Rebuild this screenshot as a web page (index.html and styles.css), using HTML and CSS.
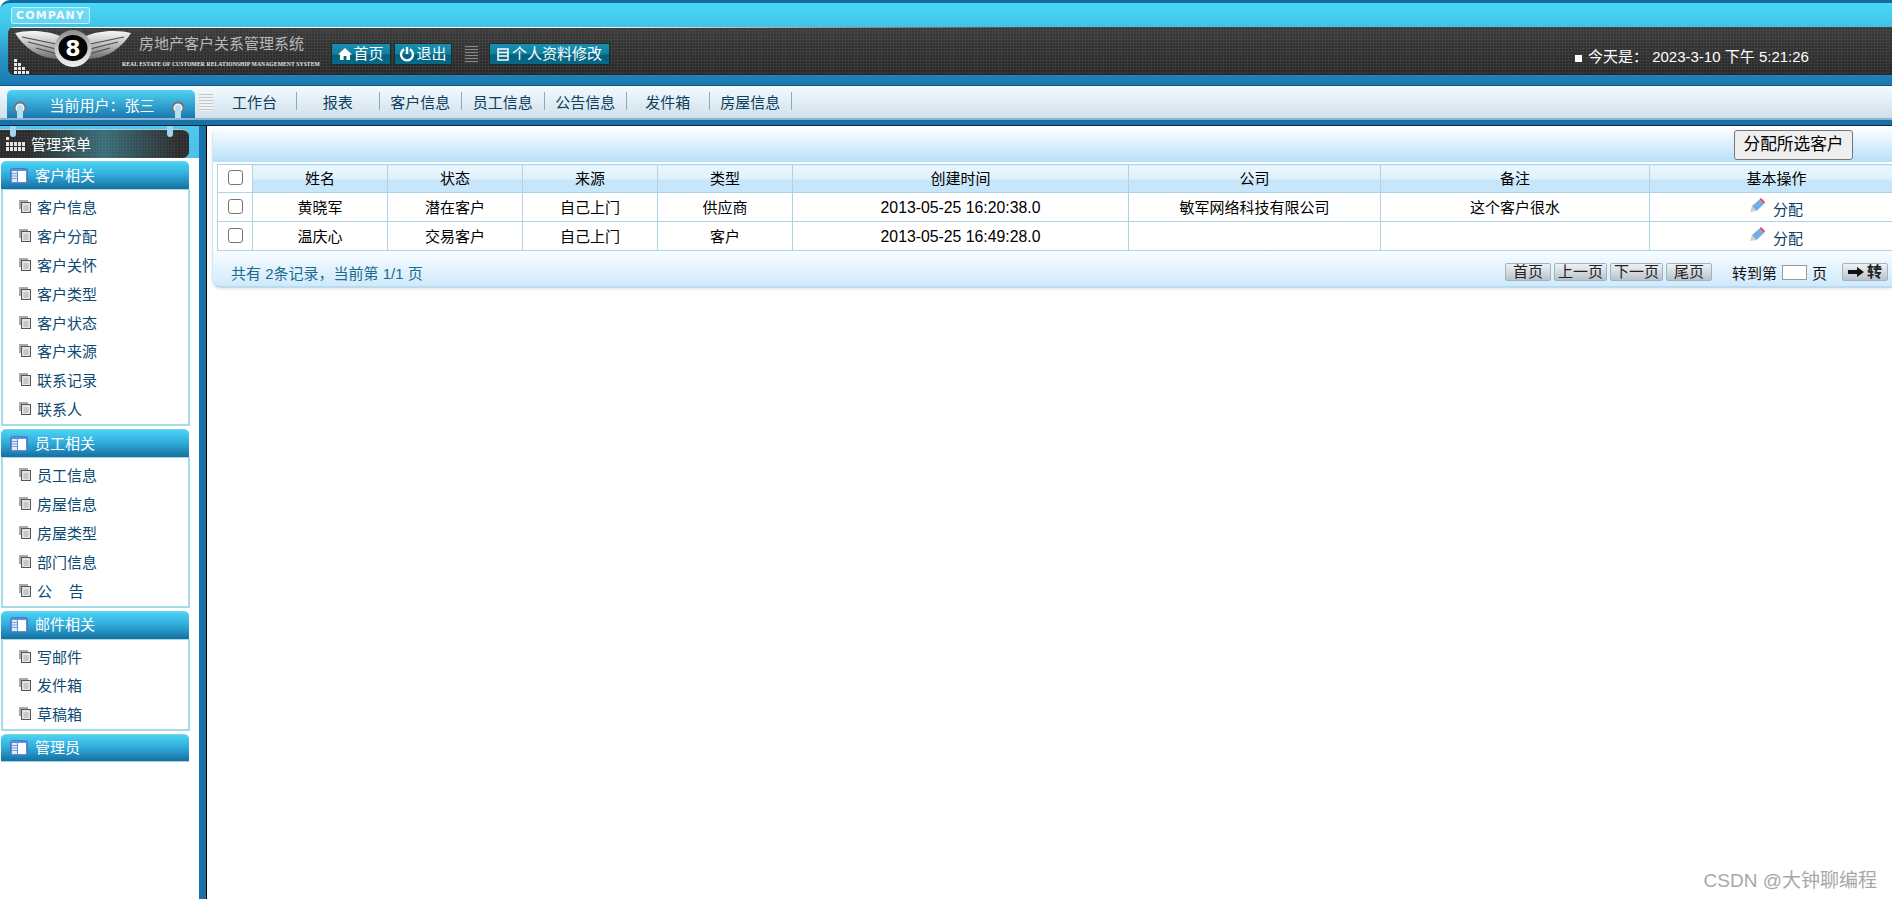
FILE: index.html
```html
<!DOCTYPE html>
<html lang="zh-CN">
<head>
<meta charset="utf-8">
<title>房地产客户关系管理系统</title>
<link rel="stylesheet" href="styles.css">
</head>
<body>
<svg class="defs" width="0" height="0" aria-hidden="true">
  <defs>
    <linearGradient id="wing" x1="0" y1="0" x2="0" y2="1">
      <stop offset="0" stop-color="#f8f8f8"/><stop offset=".55" stop-color="#b4b4b4"/><stop offset="1" stop-color="#6a6a6a"/>
    </linearGradient>
    <linearGradient id="ringg" x1="0" y1="0" x2="0" y2="1">
      <stop offset="0" stop-color="#8d8d8d"/><stop offset=".5" stop-color="#c8c8c8"/><stop offset="1" stop-color="#f2f2f2"/>
    </linearGradient>
    <symbol id="panel-ic" viewBox="0 0 18 16">
      <rect x=".5" y=".5" width="17" height="15" rx="2" fill="#5b8fd8" stroke="#4a78c4"/>
      <rect x="2" y="3" width="5" height="11" fill="#dfeafa"/>
      <path d="M2 5.5h5M2 8h5M2 10.5h5" stroke="#7da3dc" stroke-width="1"/>
      <rect x="8" y="3" width="8" height="11" fill="#fff"/>
    </symbol>
    <symbol id="doc-ic" viewBox="0 0 12 13">
      <rect x="0" y="0" width="9" height="9" fill="#aaa"/>
      <rect x="2.5" y="2.5" width="9" height="10" fill="#e4e4e4" stroke="#555" stroke-width="1"/>
      <path d="M4.5 6h5M4.500 8h5M4.500 10h5" stroke="#aaa" stroke-width="1"/>
    </symbol>
    <symbol id="pencil-ic" viewBox="0 0 15 14">
      <path d="M0 14l2-6 4.500 5z" fill="#cfcfcf"/>
      <path d="M2 8L9.500 1.500 14 6 6.500 13z" fill="#74aee0"/>
      <path d="M9.500 1.500L11 0l4 4-1 2z" fill="#dc4a5c"/>
    </symbol>
    <symbol id="ring-ic" viewBox="0 0 14 17">
      <circle cx="7" cy="7" r="6.500" fill="#6e7478"/>
      <circle cx="7" cy="7" r="4.500" fill="#f2f8fc"/>
      <path d="M4 17V7a3 3 0 0 1 6 0v10z" fill="#b4def8"/>
    </symbol>
  </defs>
</svg>

<div class="page">
  <header class="head">
    <div class="head-top"><span class="company">COMPANY</span></div>
    <div class="banner">
      <svg class="logo" width="127" height="48" viewBox="8 27 127 48" aria-hidden="true">
        <path d="M15 33 C26 30 46 30 60 36 L58 59 C48 59 38 55 32 51 C25 46 19 40 15 33Z" fill="url(#wing)"/>
        <path d="M22 37 L56 44 M28 42 L56 49 M36 48 L57 54" stroke="#4c4c4c" stroke-width="1.2" fill="none"/>
        <path d="M131 33 C120 30 100 30 86 36 L88 59 C98 59 108 55 114 51 C121 46 127 40 131 33Z" fill="url(#wing)"/>
        <path d="M124 37 L90 44 M118 42 L90 49 M110 48 L89 54" stroke="#4c4c4c" stroke-width="1.2" fill="none"/>
        <circle cx="73" cy="48.500" r="18.500" fill="url(#ringg)"/>
        <ellipse cx="73" cy="48" rx="14.500" ry="13" fill="#050505"/>
        <text x="73" y="56" class="logo-b">8</text>
        <path d="M14 59h3v3h-3zM14 63h3v3h-3zM18 63h3v3h-3zM14 67h3v3h-3zM18 67h3v3h-3zM22 67h3v3h-3zM14 71h3v3h-3zM18 71h3v3h-3zM22 71h3v3h-3zM26 71h3v3h-3z" fill="#e8e8e8"/>
      </svg>
      <div class="brand">
        <div class="brand-title">房地产客户关系管理系统</div>
        <div class="brand-sub">REAL ESTATE OF CUSTOMER RELATIONSHIP MANAGEMENT SYSTEM</div>
      </div>
      <div class="links">
        <a class="hbtn w60">
          <svg width="14" height="14" viewBox="0 0 14 14"><path d="M7 1L0 7.500h2V13h3.600V9h2.800v4H12V7.500h2z" fill="#fff"/></svg>首页
        </a>
        <a class="hbtn w58">
          <svg width="16" height="16" viewBox="0 0 16 16"><path d="M5 3.200a6 6 0 1 0 6 0" fill="none" stroke="#fff" stroke-width="2.400"/><path d="M8 1v7" stroke="#fff" stroke-width="2.400"/></svg>退出
        </a>
        <span class="grip g-head"></span>
        <a class="hbtn w121">
          <svg width="12" height="13" viewBox="0 0 12 13"><path d="M1 1h10v11H1zM1 4.500h10M1 8h10" fill="none" stroke="#fff" stroke-width="1.500"/></svg>个人资料修改
        </a>
      </div>
      <div class="today"><i class="sq"></i>今天是：&nbsp;2023-3-10 下午 5:21:26</div>
    </div>
    <div class="head-foot"></div>
  </header>

  <nav class="nav">
    <div class="user-tab">
      <svg class="ring" width="14" height="17"><use href="#ring-ic"/></svg>
      <span class="user-name">当前用户：张三</span>
      <svg class="ring" width="14" height="17"><use href="#ring-ic"/></svg>
    </div>
    <span class="grip g-nav"></span>
    <ul class="nav-items">
      <li class="wide">工作台</li>
      <li>报表</li>
      <li>客户信息</li>
      <li>员工信息</li>
      <li>公告信息</li>
      <li>发件箱</li>
      <li>房屋信息</li>
    </ul>
  </nav>
  <div class="strip"></div>

  <div class="workspace">
    <aside class="side">
      <div class="side-title-wrap">
        <div class="side-title">
          <svg width="19" height="14" viewBox="0 0 19 14"><path d="M0 0h3v3H0zM0 5h3v4H0zM4 5h3v4H4zM8 5h3v4H8zM12 5h3v4h-3zM16 5h3v4h-3zM0 10h3v4H0zM4 10h3v4H4zM8 10h3v4H8zM12 10h3v4h-3zM16 10h3v4h-3z" fill="#e6e6e6"/></svg>
          <span>管理菜单</span>
        </div>
      </div>

      <section class="group">
        <h3 class="group-head"><svg width="18" height="16"><use href="#panel-ic"/></svg>客户相关</h3>
        <ul class="group-list">
          <li><svg width="12" height="13"><use href="#doc-ic"/></svg>客户信息</li>
          <li><svg width="12" height="13"><use href="#doc-ic"/></svg>客户分配</li>
          <li><svg width="12" height="13"><use href="#doc-ic"/></svg>客户关怀</li>
          <li><svg width="12" height="13"><use href="#doc-ic"/></svg>客户类型</li>
          <li><svg width="12" height="13"><use href="#doc-ic"/></svg>客户状态</li>
          <li><svg width="12" height="13"><use href="#doc-ic"/></svg>客户来源</li>
          <li><svg width="12" height="13"><use href="#doc-ic"/></svg>联系记录</li>
          <li><svg width="12" height="13"><use href="#doc-ic"/></svg>联系人</li>
        </ul>
      </section>
      <section class="group">
        <h3 class="group-head"><svg width="18" height="16"><use href="#panel-ic"/></svg>员工相关</h3>
        <ul class="group-list">
          <li><svg width="12" height="13"><use href="#doc-ic"/></svg>员工信息</li>
          <li><svg width="12" height="13"><use href="#doc-ic"/></svg>房屋信息</li>
          <li><svg width="12" height="13"><use href="#doc-ic"/></svg>房屋类型</li>
          <li><svg width="12" height="13"><use href="#doc-ic"/></svg>部门信息</li>
          <li><svg width="12" height="13"><use href="#doc-ic"/></svg>公&nbsp;&nbsp;&nbsp;&nbsp;告</li>
        </ul>
      </section>
      <section class="group">
        <h3 class="group-head"><svg width="18" height="16"><use href="#panel-ic"/></svg>邮件相关</h3>
        <ul class="group-list">
          <li><svg width="12" height="13"><use href="#doc-ic"/></svg>写邮件</li>
          <li><svg width="12" height="13"><use href="#doc-ic"/></svg>发件箱</li>
          <li><svg width="12" height="13"><use href="#doc-ic"/></svg>草稿箱</li>
        </ul>
      </section>
      <section class="group">
        <h3 class="group-head closed"><svg width="18" height="16"><use href="#panel-ic"/></svg>管理员</h3>
      </section>
    </aside>
    <div class="rail"></div>

    <main class="main">
      <div class="panel">
        <div class="toolbar"><button class="assign" type="button">分配所选客户</button></div>
        <table class="grid">
          <colgroup>
            <col class="c-check"><col class="c-s"><col class="c-s"><col class="c-s"><col class="c-s">
            <col class="c-time"><col class="c-co"><col class="c-note"><col class="c-op">
          </colgroup>
          <thead>
            <tr>
              <td class="chk"><input type="checkbox" class="cb"></td>
              <th>姓名</th><th>状态</th><th>来源</th><th>类型</th><th>创建时间</th><th>公司</th><th>备注</th><th>基本操作</th>
            </tr>
          </thead>
          <tbody>
            <tr>
              <td class="chk"><input type="checkbox" class="cb"></td>
              <td>黄晓军</td><td>潜在客户</td><td>自己上门</td><td>供应商</td><td class="num">2013-05-25 16:20:38.0</td><td>敏军网络科技有限公司</td><td>这个客户很水</td>
              <td><span class="op"><svg width="15" height="14"><use href="#pencil-ic"/></svg><a>分配</a></span></td>
            </tr>
            <tr>
              <td class="chk"><input type="checkbox" class="cb"></td>
              <td>温庆心</td><td>交易客户</td><td>自己上门</td><td>客户</td><td class="num">2013-05-25 16:49:28.0</td><td></td><td></td>
              <td><span class="op"><svg width="15" height="14"><use href="#pencil-ic"/></svg><a>分配</a></span></td>
            </tr>
          </tbody>
        </table>
        <div class="pager">
          <span class="count">共有 2条记录，当前第 1/1 页</span>
          <div class="pager-ctrl">
            <button class="pbtn w46" type="button">首页</button>
            <button class="pbtn w53" type="button">上一页</button>
            <button class="pbtn w53" type="button">下一页</button>
            <button class="pbtn w46" type="button">尾页</button>
            <span class="goto">转到第<input class="page-input" type="text">页</span>
            <button class="pbtn w46 go" type="button"><svg width="16" height="10" viewBox="0 0 16 10"><path d="M0 3h9V0l7 5-7 5V7H0z" fill="#111"/></svg>转</button>
          </div>
        </div>
      </div>
    </main>
  </div>
  <div class="watermark">CSDN @大钟聊编程</div>
</div>
</body>
</html>
```

FILE: styles.css
```css
* { box-sizing: border-box; }
html, body { margin: 0; padding: 0; height: 100%; overflow: hidden; background: #fff; }
body { font-family: "Liberation Sans", "Noto Sans CJK SC", sans-serif; font-size: 15px; color: #000; }
ul { list-style: none; margin: 0; padding: 0; }
h3 { margin: 0; font-weight: normal; font-size: 15px; }
.defs { position: absolute; }
.page { position: relative; height: 899px; display: flex; flex-direction: column; overflow: hidden; }

/* header */
.head {
  height: 85px; flex: none; margin-top: 0; border-top: 3px solid #146ba3; border-top-left-radius: 10px;
  background: linear-gradient(180deg, #49d8f6 0, #3cc0e4 28px, #2a96c8 52px, #1a78b0 82px);
  display: flex; flex-direction: column;
}
.head-top { height: 24px; padding: 4px 0 0 11px; flex: none; }
.company {
  display: block; width: 79px; height: 17px; border: 1px solid rgba(255,255,255,.6); border-radius: 3px;
  background: rgba(255,255,255,.22); color: #f2fbff; font: bold 11px/15px "DejaVu Sans", sans-serif;
  letter-spacing: 1.1px; text-align: center;
}
.banner {
  height: 48px; margin-left: 8px; flex: none; display: flex; align-items: stretch; border-radius: 6px 0 0 6px;
  background-color: #2f2f2f;
  background-image:
    linear-gradient(90deg, #fff, #fff 30%, rgba(255,255,255,0) 55%),
    linear-gradient(90deg, rgba(255,255,255,.05) 1px, transparent 1px),
    linear-gradient(180deg, rgba(255,255,255,.05) 1px, transparent 1px),
    linear-gradient(180deg, #3a3a3a, #272727);
  background-size: 100% 1px, 3px 3px, 3px 3px, 100% 100%;
  background-repeat: no-repeat, repeat, repeat, no-repeat;
}
.logo { flex: none; display: block; margin-right: -13px; }
.logo-b { font: bold 22px "DejaVu Sans", sans-serif; fill: #fff; text-anchor: middle; }
.brand { width: 199px; flex: none; display: flex; flex-direction: column; }
.brand-title { padding: 7px 0 0 17px; font-size: 15px; line-height: 20px; color: #b9b9b9; white-space: nowrap; }
.brand-sub {
  margin-top: 6px; font: bold 5.580px/8px "Liberation Serif", serif; color: #e8e8e8; white-space: nowrap; letter-spacing: .12px;
}
.links { display: flex; align-items: flex-start; margin-left: 10px; padding-top: 16px; }
.hbtn {
  height: 22px; display: flex; align-items: center; justify-content: center; gap: 1px; color: #fff; font-size: 15px; line-height: 20px;
  border: 1px solid #1c2b30; background: linear-gradient(180deg, #1a8fb0 0, #11809f 50%, #05607c 55%, #066a87 100%);
}
.w60 { width: 60px; margin-right: 3px; }
.w58 { width: 58px; }
.w121 { width: 121px; gap: 3px; }
.grip {
  display: block; flex: none;
  background: repeating-linear-gradient(180deg, #8a8a8a 0 1px, #3a3a3a 1px 3px);
}
.g-head { width: 13px; height: 17px; margin: 3px 11px 0 13px; }
.today {
  margin-left: 965px; padding-top: 20px; color: #fff; font-size: 15px; line-height: 20px; white-space: nowrap; display: flex; align-items: flex-start;
}
.sq { width: 7px; height: 7px; margin: 8px 6px 0 0; background: #fff; flex: none; }
.head-foot { flex: none; height: 10px; }

/* nav */
.nav {
  height: 35px; flex: none; display: flex; border-top: 1px solid #0f5a85;
  background: linear-gradient(180deg, #f3faff 0, #d0e0eb 100%); border-bottom: 2px solid #8db5cc;
  align-items: flex-start;
}
.user-tab {
  width: 188px; height: 28px; margin: 4px 0 0 7px; flex: none; border-radius: 5px 5px 0 0;
  background: linear-gradient(180deg, #4fd3f3 0, #1a78b0 100%); color: #fff; font-size: 15px; line-height: 32px;
  display: flex; justify-content: space-between; padding: 0 10px 0 6px;
}
.user-name { margin-left: 6px; }
.ring { flex: none; margin-top: 11px; display: block; }
.g-nav {
  width: 14px; height: 17px; margin: 8px 0 0 4px;
  background: repeating-linear-gradient(180deg, #c2c8cc 0 1px, #eef3f6 1px 3px);
}
.nav-items { display: flex; margin-top: 6px; }
.nav-items li {
  width: 82.500px; height: 18px; text-align: center; font-size: 15px; line-height: 21px; color: #0f3f5f; border-right: 1px solid #8fa9bb; white-space: nowrap;
}
.nav-items .wide { width: 84px; }
.strip { height: 6px; flex: none; background: #1a70a8; border-bottom: 1px solid #08283c; }

/* workspace */
.workspace { flex: 1; min-height: 0; display: flex; }
.side { width: 199px; flex: none; background: #fff; }
.side-title-wrap { height: 32px; background: linear-gradient(180deg, #4cc8ee, #4cc0e8); padding-top: 3px; }
.side-title {
  width: 189px; height: 29px; border-radius: 0 7px 7px 0; position: relative; color: #fff; font-size: 15px; line-height: 29px;
  display: flex; align-items: center; gap: 7px; padding-left: 6px; border-top: 1px solid #b6c6cc;
  background-color: #2d2d2d;
  background-image:
    linear-gradient(90deg, rgba(255,255,255,.04) 1px, transparent 1px),
    linear-gradient(180deg, rgba(255,255,255,.04) 1px, transparent 1px),
    linear-gradient(90deg, #2b2b2b 15%, #376c78 55%, #2b2b2b 95%);
  background-size: 3px 3px, 3px 3px, 100% 100%;
}
.side-title span { padding-top: 1px; margin-left: -1px; }
.side-title::before, .side-title::after {
  content: ""; position: absolute; top: -4px; width: 6px; height: 11px; border-radius: 0 0 3px 3px; background: #9fd4f5;
}
.side-title::before { left: 10px; }
.side-title::after { left: 167px; }
.group { width: 190px; margin-bottom: 3px; }
.side-title-wrap + .group { margin-top: 3px; }
.group-head {
  height: 28px; margin-left: 1px; width: 188px; border-radius: 5px 5px 0 0; color: #fff; display: flex; align-items: center; gap: 7px; padding-left: 9px;
  background: linear-gradient(180deg, #4ad3f3 0, #32aede 45%, #15709f 100%); border-top: 1px solid #7bd0e8;
  line-height: 26px;
}
.group-head.closed { border-bottom: 1px solid #9bd6e4; }
.group-list {
  margin-left: 1px; width: 189px; border: 1px solid #a4dbe6; border-width: 1px 2px 2px 2px; padding: 2px 0 1px; background: #fff;
}
.group-list li {
  height: 28.900px; display: flex; align-items: center; gap: 6px; padding-left: 16px; color: #0d4a72; font-size: 15px; white-space: nowrap;
}

.rail { width: 8px; flex: none; background: #1a70a8; border-right: 1px solid #000; }

/* main */
.main { flex: 1; min-width: 0; overflow: hidden; padding: 2px 0 0 5px; }
.panel { width: 1680px; height: 159px; border-radius: 8px 0 0 8px; background: #fff; box-shadow: 0 2px 3px rgba(150,180,200,.35); border-left: 1px solid #cfe6f4; }
.toolbar {
  height: 34px; border-radius: 8px 0 0 0; padding: 2px 0 0 1521px; 
  background: linear-gradient(180deg, #fdfeff 0, #b5e0f8 100%);
}
.assign {
  display: block; width: 119px; height: 30px; padding: 0; font-family: inherit; font-size: 16.670px; line-height: 26px; color: #000;
  background: #efefef; border: 1px solid #767676; border-radius: 3px;
}
.grid {
  table-layout: fixed; border-collapse: collapse; width: 1686px; margin: 2px 0 0 4px; background: #fff;
}
.c-check { width: 35px; }
.c-s { width: 135px; }
.c-time { width: 336px; }
.c-co { width: 252px; }
.c-note { width: 269px; }
.c-op { width: 254px; }
.grid th, .grid td {
  border: 1px solid #b0d4e6; padding: 0; text-align: center; font-size: 15px; font-weight: normal; line-height: 20px; overflow: hidden; white-space: nowrap;
}
.grid thead tr { height: 28px; }
.grid tbody tr { height: 29px; }
.grid tbody td { padding-top: 2px; }
.grid td.chk { padding-top: 0; }
.grid th { background: linear-gradient(180deg, #e8f6fe 0, #e0f2fc 48%, #c8e6f9 55%, #c8e6f9 100%); }
.cb {
  appearance: none; display: block; width: 15px; height: 15px; margin: 0 auto 2px; background: #fff; border: 1.500px solid #767676; border-radius: 3px;
}
.grid td.num { font-size: 15.800px; }
.op { display: inline-flex; align-items: flex-start; gap: 8px; padding-top: 2px; }
.op a { color: #0a3d62; line-height: 20px; margin-top: 2px; }
.pager {
  height: 37px; display: flex; align-items: center; justify-content: space-between; padding: 7px 4px 0 18px;
  background: linear-gradient(180deg, #f8fcff 0, #cfeafc 100%); border-bottom: 2px solid #bcdcee; border-radius: 0 0 0 8px;
}
.count { color: #1b6a8c; font-size: 15px; white-space: nowrap; }
.pager-ctrl { display: flex; align-items: center; gap: 3px; }
.pbtn {
  height: 18px; padding: 0; font-family: inherit; font-size: 15px; line-height: 16px; color: #222; border: 1px solid #9fb5c4; border-radius: 2px;
  background: linear-gradient(180deg, #eef2f5 0, #d2d8dd 55%, #b9c3cb 100%); display: flex; align-items: center; justify-content: center; gap: 3px;
}
.w46 { width: 46px; }
.w53 { width: 53px; }
.goto { display: flex; align-items: center; margin: 0 12px 0 17px; white-space: nowrap; color: #111; }
.page-input { width: 25px; height: 15px; margin: 1px 5px 0; padding: 0; background: #fff; border: 1px solid #9a9a9a; }
.go { font-weight: bold; }

.watermark {
  position: absolute; right: 15px; top: 869px; font-size: 19px; line-height: 24px; color: #a8a8a8; white-space: nowrap;
}
```
